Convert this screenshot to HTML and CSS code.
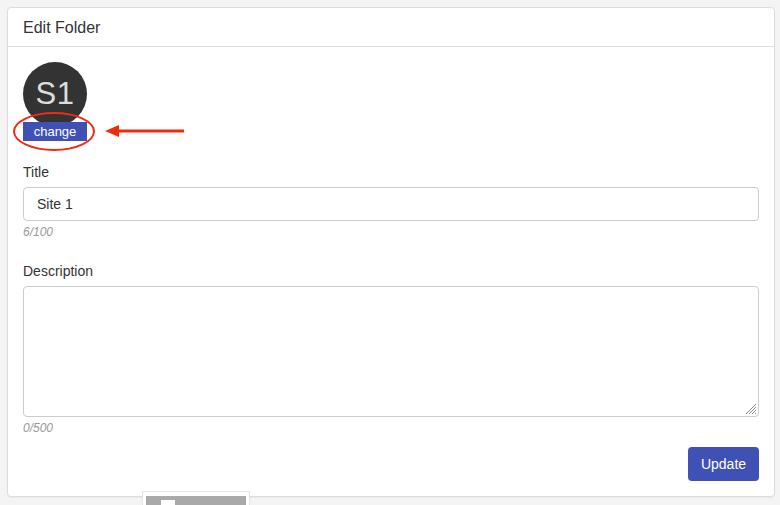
FILE: index.html
```html
<!DOCTYPE html>
<html>
<head>
<meta charset="utf-8">
<link rel="stylesheet" href="styles.css">
</head>
<body>
<div class="card">
  <div class="card-header">Edit Folder</div>
  <div class="card-body">
    <div class="avatar-wrap">
      <div class="avatar">S1</div>
      <div class="change-row">
        <span class="change-btn">change</span>
        <span class="ring"></span>
        <svg class="arrow" width="80" height="12" viewBox="0 0 80 12"><line x1="12" y1="6" x2="79" y2="6" stroke="#f12a0c" stroke-width="3"/><polygon points="0,6 14,0 14,12" fill="#f12a0c"/></svg>
      </div>
    </div>
    <div class="field">
      <label class="label">Title</label>
      <div class="input">Site 1</div>
      <div class="count">6/100</div>
    </div>
    <div class="field">
      <label class="label">Description</label>
      <div class="textarea">
        <svg class="grip" width="12" height="12" viewBox="0 0 12 12"><g stroke="#888" stroke-width="1"><line x1="11" y1="1" x2="1" y2="11"/><line x1="11" y1="4" x2="4" y2="11"/><line x1="11" y1="7" x2="7" y2="11"/><line x1="11" y1="10" x2="10" y2="11"/></g></svg>
      </div>
      <div class="count">0/500</div>
    </div>
    <div class="actions">
      <button class="update">Update</button>
    </div>
  </div>
</div>
<div class="peek"><span class="peek-inner"><span class="peek-dot"></span></span></div>
</body>
</html>
```
FILE: styles.css
```css
html, body { margin: 0; padding: 0; }
body {
  background: #f4f4f4;
  font-family: "Liberation Sans", Arial, sans-serif;
  color: #333;
  padding: 7px 5px 0 7px;
  height: 505px;
  box-sizing: border-box;
  position: relative;
  overflow: hidden;
}
.card {
  background: #fff;
  border: 1px solid #dcdcdc;
  border-radius: 4px;
  height: 490px;
  box-sizing: border-box;
  box-shadow: 0 1px 1px rgba(0,0,0,0.04);
}
.card-header {
  height: 39px;
  box-sizing: border-box;
  border-bottom: 1px solid #ddd;
  padding: 11px 15px 0;
  font-size: 16px;
  color: #333;
}
.card-body {
  padding: 15px 15px 0;
}
.avatar-wrap {
  display: flex;
  flex-direction: column;
  align-items: flex-start;
}
.avatar {
  width: 64px;
  height: 64px;
  border-radius: 50%;
  background: #333;
  color: #ddd;
  font-size: 31px;
  display: flex;
  align-items: center;
  justify-content: center;
  letter-spacing: 0.5px;
}
.change-row {
  position: relative;
  margin-top: -4px;
  height: 19px;
  margin-bottom: 1px;
  display: flex;
}
.change-btn {
  width: 64px;
  height: 19px;
  background: #3f51b5;
  color: #fff;
  font-size: 13px;
  display: flex;
  align-items: center;
  justify-content: center;
}
.ring {
  position: absolute;
  left: -10px;
  top: -10px;
  width: 82px;
  height: 39px;
  border: 2.5px solid #ef2b12;
  border-radius: 50%;
  box-sizing: border-box;
}
.arrow {
  position: absolute;
  left: 82px;
  top: 3px;
}
.field {
  margin-top: 22px;
}
.field + .field { margin-top: 24px; }
.label {
  display: block;
  font-size: 14px;
  color: #333;
  height: 16px;
  margin-bottom: 7px;
}
.input {
  height: 34px;
  box-sizing: border-box;
  border: 1px solid #ccc;
  border-radius: 4px;
  padding: 8px 13px;
  font-size: 14px;
  color: #333;
}
.textarea {
  height: 131px;
  box-sizing: border-box;
  border: 1px solid #ccc;
  border-radius: 4px;
  position: relative;
}
.grip {
  position: absolute;
  right: 1px;
  bottom: 1px;
}
.count {
  font-size: 12px;
  font-style: italic;
  color: #999;
  margin-top: 4px;
}
.actions {
  display: flex;
  justify-content: flex-end;
  margin-top: 12px;
}
.update {
  width: 71px;
  height: 34px;
  background: #3f51b5;
  color: #fff;
  border: none;
  border-radius: 4px;
  font-family: inherit;
  font-size: 14px;
}
.peek {
  position: absolute;
  left: 142px;
  top: 491px;
  width: 108px;
  height: 20px;
  background: #fff;
  border: 1px solid #e4e4e4;
  box-sizing: border-box;
  padding: 4px 3px 0;
}
.peek-inner {
  display: block;
  height: 20px;
  background: #a9a9a9;
  position: relative;
}
.peek-dot {
  position: absolute;
  left: 15px;
  top: 4px;
  width: 14px;
  height: 10px;
  background: #fff;
}
```
